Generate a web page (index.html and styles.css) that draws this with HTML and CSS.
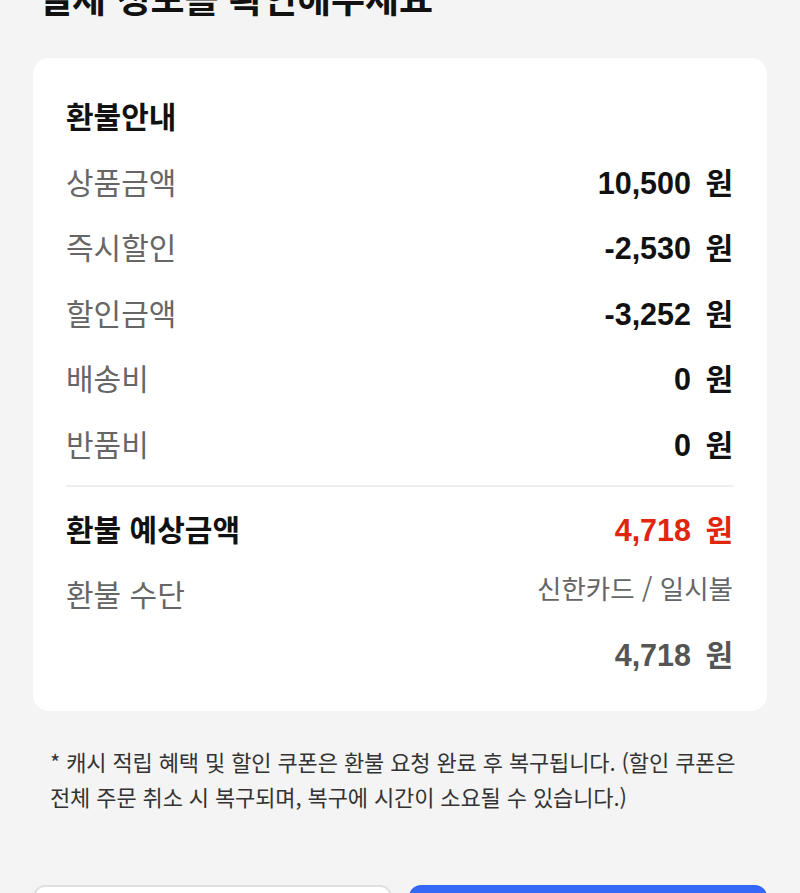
FILE: index.html
```html
<!DOCTYPE html>
<html lang="ko">
<head>
<meta charset="utf-8">
<title>환불안내</title>
<link rel="stylesheet" href="styles.css">
</head>
<body>
<div class="page">
  <h1 class="page-title">결제 정보를 확인해주세요</h1>

  <section class="card">
    <h2 class="card-title">환불안내</h2>
    <div class="row"><span class="label">상품금액</span><span class="value"><span class="num">10,500</span> 원</span></div>
    <div class="row"><span class="label">즉시할인</span><span class="value"><span class="num">-2,530</span> 원</span></div>
    <div class="row"><span class="label">할인금액</span><span class="value"><span class="num">-3,252</span> 원</span></div>
    <div class="row"><span class="label">배송비</span><span class="value"><span class="num">0</span> 원</span></div>
    <div class="row"><span class="label">반품비</span><span class="value"><span class="num">0</span> 원</span></div>
    <hr class="divider">
    <div class="row total"><span class="label">환불 예상금액</span><span class="value red"><span class="num">4,718</span> 원</span></div>
    <div class="row method">
      <span class="label">환불 수단</span>
      <div class="method-right">
        <span class="method-name">신한카드 / 일시불</span>
        <span class="value gray"><span class="num">4,718</span> 원</span>
      </div>
    </div>
  </section>

  <p class="notice">* 캐시 적립 혜택 및 할인 쿠폰은 환불 요청 완료 후 복구됩니다. (할인 쿠폰은 전체 주문 취소 시 복구되며, 복구에 시간이 소요될 수 있습니다.)</p>

  <div class="buttons">
    <button class="btn btn-outline">이전</button>
    <button class="btn btn-primary">환불 요청</button>
  </div>
</div>
</body>
</html>
```

FILE: styles.css
```css
html, body {
  margin: 0;
  padding: 0;
  background: #f4f4f4;
}
body {
  font-family: "Noto Sans CJK KR", "Noto Sans", sans-serif;
  color: #111;
}
.page {
  padding: 0 33px;
}
.page-title {
  margin: -27px 0 37px 5px;
  font-size: 37px;
  line-height: 48px;
  font-weight: 700;
  color: #111;
}
.card {
  background: #fff;
  border-radius: 16px;
  padding: 33px 34px 23px 33px;
}
.card-title {
  margin: 0 0 9px;
  font-size: 30px;
  line-height: 48px;
  font-weight: 700;
  color: #111;
}
.row {
  display: flex;
  justify-content: space-between;
  align-items: center;
  height: 65.5px;
}
.label {
  font-size: 30px;
  color: #666;
  font-weight: 400;
}
.value {
  font-size: 30px;
  font-weight: 700;
  color: #111;
  word-spacing: 6px;
}
.num {
  font-family: "Liberation Sans", Arial, sans-serif;
  font-size: 30.5px;
}
.divider {
  border: 0;
  height: 2px;
  background: #eeeeee;
  margin: 9.5px 0 8px;
}
.total .label {
  color: #111;
  font-weight: 700;
}
.red {
  color: #e0260f;
}
.gray {
  color: #555;
}
.method {
  align-items: flex-start;
  height: auto;
}
.method > .label {
  line-height: 65.5px;
}
.method-right {
  display: flex;
  flex-direction: column;
  align-items: flex-end;
}
.method-name {
  font-size: 26.5px;
  line-height: 54px;
  color: #666;
}
.method-right .value {
  line-height: 66px;
  margin-top: 5px;
}
.notice {
  margin: 33px 0 0;
  padding: 0 17px;
  font-size: 22px;
  line-height: 35px;
  color: #333;
  letter-spacing: -0.12px;
  word-break: keep-all;
}
.buttons {
  display: flex;
  gap: 17px;
  margin-top: 71px;
}
.btn {
  flex: 1;
  height: 64px;
  border-radius: 12px;
  font-family: "Noto Sans CJK KR", sans-serif;
  font-size: 24px;
  font-weight: 700;
}
.btn-outline {
  background: #fff;
  border: 2px solid #e0e0e0;
  color: #333;
}
.btn-primary {
  background: #3668f7;
  border: 2px solid #3668f7;
  color: #fff;
}
```
